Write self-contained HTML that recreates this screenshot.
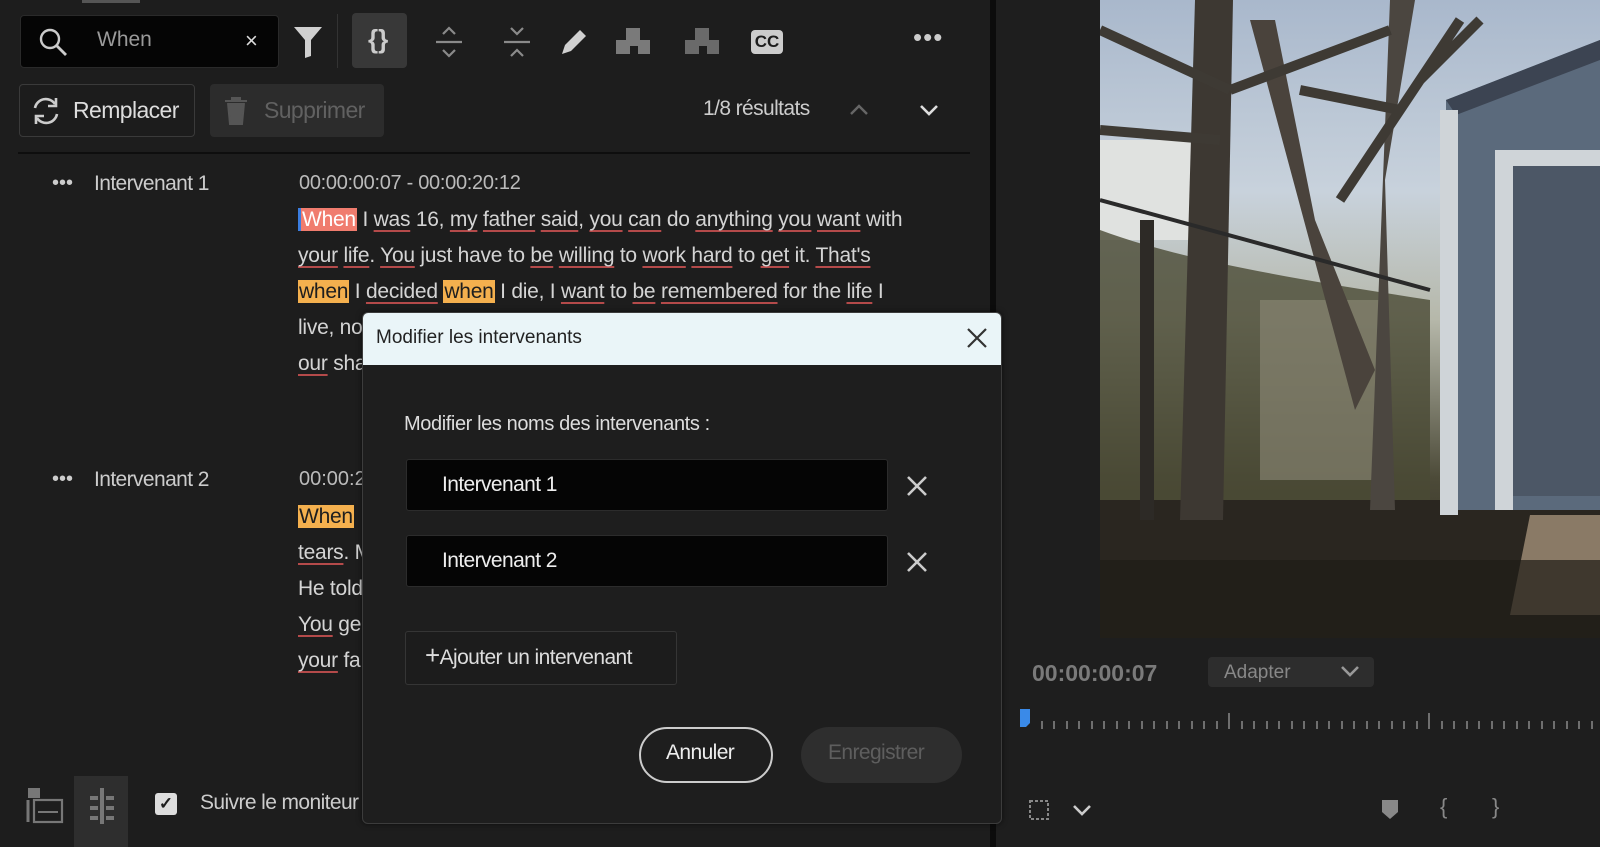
<!DOCTYPE html>
<html><head><meta charset="utf-8"><style>
*{margin:0;padding:0;box-sizing:border-box}
body{width:1600px;height:847px;background:#1e1e1e;font-family:"Liberation Sans",sans-serif;overflow:hidden;position:relative;color:#d8d8d8}
.a{position:absolute}
.u{text-decoration:underline;text-decoration-color:#b44a4a;text-underline-offset:4px}
.tx{font-size:21px;letter-spacing:-0.25px;color:#d4d4d4;line-height:36px}
.hl{background:#f4b04e;color:#1e1e1e;padding:0 1px}
.ic{fill:none;stroke:#8a8a8a;stroke-width:2.2}
</style></head><body>
<div class="a" style="left:0;top:0;width:990px;height:847px;background:#1d1d1d"></div>
<div class="a" style="left:990px;top:0;width:6px;height:847px;background:#0c0c0c"></div>
<div class="a" style="left:82px;top:0;width:58px;height:3px;background:#555"></div>
<!-- search -->
<div class="a" style="left:20px;top:15px;width:259px;height:53px;background:#050505;border-radius:4px;border:1px solid #2a2a2a"></div>
<svg class="a" style="left:36px;top:25px" width="34" height="34"><circle cx="14" cy="14" r="9" fill="none" stroke="#ccc" stroke-width="2.4"/><path d="M21 21l9 9" stroke="#ccc" stroke-width="2.8"/></svg>
<div class="a" style="left:97px;top:28px;font-size:21px;color:#9a9a9a">When</div>
<div class="a" style="left:245px;top:28px;font-size:22px;color:#ddd">×</div>
<svg class="a" style="left:292px;top:24px" width="34" height="36"><path d="M2 3h28l-11 13v16l-6 2V16z" fill="#d0d0d0"/></svg>
<div class="a" style="left:337px;top:14px;width:1px;height:54px;background:#333"></div>
<div class="a" style="left:352px;top:13px;width:55px;height:55px;background:#383838;border-radius:4px"></div>
<div class="a" style="left:368px;top:24px;font-size:26px;color:#ccc;font-weight:bold">{}</div>
<svg class="a" style="left:432px;top:24px" width="34" height="36"><path class="ic" d="M11 10l6-6 6 6M4 18h26M11 26l6 6 6-6"/></svg>
<svg class="a" style="left:500px;top:24px" width="34" height="36"><path class="ic" d="M11 4l6 6 6-6M4 18h26M11 32l6-6 6 6"/></svg>
<svg class="a" style="left:558px;top:26px" width="32" height="32"><path d="M4 28l3-9 15-15 6 6-15 15z" fill="#d0d0d0"/></svg>
<svg class="a" style="left:614px;top:26px" width="40" height="30"><path d="M12 2h14v12h10v14h-12v-8h-8v8H2V14h10z" fill="#7a7a7a"/></svg>
<svg class="a" style="left:683px;top:26px" width="40" height="30"><path d="M12 2h14v12h10v14h-12v-8h-8v8H2V14h10z" fill="#6a6a6a"/></svg>
<div class="a" style="left:751px;top:30px;width:32px;height:24px;background:#ccc;border-radius:4px;color:#1d1d1d;font-size:17px;font-weight:bold;text-align:center;line-height:24px">CC</div>
<div class="a" style="left:913px;top:22px;font-size:26px;color:#ccc;letter-spacing:1px">•••</div>
<!-- row 2 -->
<div class="a" style="left:19px;top:84px;width:176px;height:53px;border:1px solid #3a3a3a;border-radius:4px;background:#1c1c1c"></div>
<svg class="a" style="left:30px;top:95px" width="32" height="32"><path d="M5 13a11 11 0 0 1 20-4M27 19a11 11 0 0 1-20 4" fill="none" stroke="#ccc" stroke-width="2.6"/><path d="M26 3v8h-8M6 29v-8h8" fill="none" stroke="#ccc" stroke-width="2.6"/></svg>
<div class="a" style="left:73px;top:97px;font-size:23px;color:#ddd;letter-spacing:-0.6px">Remplacer</div>
<div class="a" style="left:210px;top:84px;width:174px;height:53px;background:#2c2c2c;border-radius:4px"></div>
<svg class="a" style="left:222px;top:95px" width="28" height="32"><path d="M3 6h22M10 6V3h8v3M6 8l2 21h12l2-21" fill="#555" stroke="#555" stroke-width="2"/></svg>
<div class="a" style="left:264px;top:97px;font-size:23px;color:#616161;letter-spacing:-0.6px">Supprimer</div>
<div class="a" style="left:703px;top:97px;font-size:21px;color:#ccc;letter-spacing:-0.6px">1/8 résultats</div>
<svg class="a" style="left:848px;top:102px" width="22" height="16"><path d="M3 12l8-8 8 8" fill="none" stroke="#666" stroke-width="2.4"/></svg>
<svg class="a" style="left:918px;top:102px" width="22" height="16"><path d="M3 4l8 8 8-8" fill="none" stroke="#ddd" stroke-width="2.6"/></svg>
<div class="a" style="left:18px;top:152px;width:952px;height:2px;background:#0e0e0e"></div>
<!-- speaker 1 -->
<div class="a" style="left:52px;top:172px;font-size:20px;color:#ccc">•••</div>
<div class="a" style="left:94px;top:172px;font-size:21px;color:#ccc;letter-spacing:-0.6px">Intervenant 1</div>
<div class="a" style="left:299px;top:172px;font-size:20px;color:#bbb;letter-spacing:-0.3px">00:00:00:07 - 00:00:20:12</div>
<div class="a tx" style="left:298px;top:202px;width:690px;white-space:nowrap">
<span style="background:#f07c6e;color:#fff;border-left:3px solid #3a7de0;padding:0 1px">When</span> I <span class="u">was</span> 16, <span class="u">my</span> <span class="u">father</span> <span class="u">said</span>, <span class="u">you</span> <span class="u">can</span> do <span class="u">anything</span> <span class="u">you</span> <span class="u">want</span> with<br>
<span class="u">your</span> <span class="u">life</span>. <span class="u">You</span> just have to <span class="u">be</span> <span class="u">willing</span> to <span class="u">work</span> <span class="u">hard</span> to <span class="u">get</span> it. <span class="u">That's</span><br>
<span class="hl">when</span> I <span class="u">decided</span> <span class="hl">when</span> I die, I <span class="u">want</span> to <span class="u">be</span> <span class="u">remembered</span> for the <span class="u">life</span> I<br>
live, no<br><span class="u">our</span> sha</div>
<!-- speaker 2 -->
<div class="a" style="left:52px;top:468px;font-size:20px;color:#ccc">•••</div>
<div class="a" style="left:94px;top:468px;font-size:21px;color:#ccc;letter-spacing:-0.6px">Intervenant 2</div>
<div class="a" style="left:299px;top:468px;font-size:20px;color:#bbb">00:00:2</div>
<div class="a tx" style="left:298px;top:499px;width:70px;white-space:nowrap"><span class="hl">When</span><br><span class="u">tears</span>. M<br>He told<br><span class="u">You</span> ge<br><span class="u">your</span> fa</div>
<!-- bottom left -->
<svg class="a" style="left:26px;top:786px" width="40" height="40"><rect x="2" y="2" width="12" height="10" fill="#777"/><rect x="8" y="14" width="28" height="22" fill="none" stroke="#777" stroke-width="2.2"/><path d="M12 26h20" stroke="#777" stroke-width="2"/><path d="M2 14v22" stroke="#777" stroke-width="3"/></svg>
<div class="a" style="left:74px;top:776px;width:54px;height:71px;background:#2e2e2e"></div>
<svg class="a" style="left:86px;top:786px" width="32" height="40"><path d="M16 2v36M4 12h8M20 12h8M4 22h8M20 22h8M4 32h8M20 32h8" stroke="#777" stroke-width="4"/></svg>
<div class="a" style="left:155px;top:793px;width:22px;height:22px;background:#ddd;border-radius:3px;color:#1d1d1d;font-size:17px;text-align:center;line-height:22px;font-weight:bold">✓</div>
<div class="a" style="left:200px;top:791px;font-size:21px;color:#ccc;letter-spacing:-0.6px">Suivre le moniteur</div>
<!-- video -->
<svg class="a" style="left:1100px;top:0" width="500" height="638">
<defs><linearGradient id="sk" x1="0" y1="0" x2="0" y2="1"><stop offset="0" stop-color="#a9b8cc"/><stop offset=".3" stop-color="#c8d2dc"/><stop offset=".5" stop-color="#b6b8aa"/><stop offset=".75" stop-color="#4c4a38"/><stop offset="1" stop-color="#26231c"/></linearGradient></defs>
<rect width="500" height="638" fill="url(#sk)"/>
<path d="M0 140h110v100H0z" fill="#e0e2e0"/>
<path d="M0 230C80 260 200 280 330 300V520H0z" fill="#4a4a34" opacity=".8"/>
<path d="M160 300h120v180H160z" fill="#8d8a78" opacity=".6"/>
<path d="M0 500h500v138H0z" fill="#2a2620"/>
<path d="M95 0h38l-10 520H80z" fill="#3d3832"/>
<path d="M150 20h25l40 200 60 150-20 40z" fill="#4a433c"/>
<path d="M290 0h25l-30 180 10 330h-25z" fill="#4b4640"/>
<path d="M0 30l130 60M0 130l120 10M130 90l160-60M240 200l120-180M200 90l100 20M320 80l60-60" stroke="#3e3a34" stroke-width="10"/>
<path d="M0 200l330 90" stroke="#2a2a2a" stroke-width="4"/>
<path d="M40 220h14v300H40z" fill="#2d2a26"/>
<path d="M346 100l154-60v470H346z" fill="#5b6a7c"/>
<path d="M346 100l154-60v20L356 115z" fill="#3c4452"/>
<rect x="340" y="110" width="18" height="405" fill="#cfd4d8"/>
<rect x="395" y="150" width="18" height="360" fill="#cfd4d8"/>
<rect x="395" y="150" width="105" height="16" fill="#cfd4d8"/>
<rect x="413" y="166" width="87" height="330" fill="#4c5766"/>
<path d="M430 515h70v100h-90z" fill="#8a7a66"/>
<path d="M0 560h500v78H0z" fill="#1f1c17" opacity=".7"/>
</svg>
<!-- monitor controls -->
<div class="a" style="left:1032px;top:660px;font-size:23px;color:#7a7a7a;font-weight:bold">00:00:00:07</div>
<div class="a" style="left:1208px;top:657px;width:166px;height:30px;background:#2d2d2d;border-radius:4px"></div>
<div class="a" style="left:1224px;top:662px;font-size:19px;color:#888">Adapter</div>
<svg class="a" style="left:1340px;top:664px" width="20" height="14"><path d="M2 3l8 8 8-8" fill="none" stroke="#999" stroke-width="2.6"/></svg>
<svg class="a" style="left:1018px;top:705px" width="582" height="30">
<path d="M2 4h10v14l-4 4H2z" fill="#3a8ae8"/>
<g stroke="#888" stroke-width="1.5">
<path d="M24 16v8M36 16v8M49 16v8M61 16v8M74 16v8M86 16v8M99 16v8M111 16v8M124 16v8M136 16v8M149 16v8M161 16v8M174 16v8M186 16v8M199 16v8M211 8v16M224 16v8M236 16v8M249 16v8M261 16v8M274 16v8M286 16v8M299 16v8M311 16v8M324 16v8M336 16v8M349 16v8M361 16v8M374 16v8M386 16v8M399 16v8M411 8v16M424 16v8M436 16v8M449 16v8M461 16v8M474 16v8M486 16v8M499 16v8M511 16v8M524 16v8M536 16v8M549 16v8M561 16v8M574 16v8"/>
</g></svg>
<svg class="a" style="left:1026px;top:797px" width="26" height="26"><rect x="4" y="4" width="18" height="18" fill="none" stroke="#888" stroke-width="2" stroke-dasharray="3 2"/></svg>
<svg class="a" style="left:1072px;top:803px" width="20" height="14"><path d="M2 3l8 8 8-8" fill="none" stroke="#ccc" stroke-width="2.6"/></svg>
<svg class="a" style="left:1380px;top:798px" width="20" height="22"><path d="M2 2h16v12l-8 7-8-7z" fill="#888"/></svg>
<div class="a" style="left:1440px;top:794px;font-size:22px;color:#888">{</div>
<div class="a" style="left:1492px;top:794px;font-size:22px;color:#888">}</div>
<!-- dialog -->
<div class="a" style="left:362px;top:312px;width:640px;height:512px;background:#1e1e1e;border:1px solid #3c3c3c;border-radius:6px;overflow:hidden;box-shadow:0 0 6px rgba(0,0,0,.6)">
<div style="height:52px;background:#eaf5f8;position:relative">
<div class="a" style="left:13px;top:14px;font-size:19px;color:#222">Modifier les intervenants</div>
<svg class="a" style="left:603px;top:14px" width="22" height="22"><path d="M2 2l18 18M20 2L2 20" stroke="#333" stroke-width="2.2"/></svg>
</div>
<div class="a" style="left:41px;top:100px;font-size:20px;color:#ddd;letter-spacing:-0.4px">Modifier les noms des intervenants :</div>
<div class="a" style="left:43px;top:146px;width:482px;height:52px;background:#050505;border:1px solid #2c2c2c;border-radius:3px"></div>
<div class="a" style="left:79px;top:160px;font-size:21px;color:#eee;letter-spacing:-0.6px">Intervenant 1</div>
<svg class="a" style="left:543px;top:162px" width="22" height="22"><path d="M2 2l18 18M20 2L2 20" stroke="#ccc" stroke-width="2.6"/></svg>
<div class="a" style="left:43px;top:222px;width:482px;height:52px;background:#050505;border:1px solid #2c2c2c;border-radius:3px"></div>
<div class="a" style="left:79px;top:236px;font-size:21px;color:#eee;letter-spacing:-0.6px">Intervenant 2</div>
<svg class="a" style="left:543px;top:238px" width="22" height="22"><path d="M2 2l18 18M20 2L2 20" stroke="#ccc" stroke-width="2.6"/></svg>
<div class="a" style="left:42px;top:318px;width:272px;height:54px;border:1px solid #353535;border-radius:3px;background:#1c1c1c"></div>
<div class="a" style="left:62px;top:332px;font-size:21px;color:#ddd;letter-spacing:-0.6px"><span style="font-size:26px;line-height:20px">+</span>Ajouter un intervenant</div>
<div class="a" style="left:276px;top:414px;width:134px;height:56px;border:2px solid #ccc;border-radius:28px"></div>
<div class="a" style="left:303px;top:428px;font-size:21px;color:#eee;letter-spacing:-0.6px">Annuler</div>
<div class="a" style="left:438px;top:414px;width:161px;height:56px;background:#2e2e2e;border-radius:28px"></div>
<div class="a" style="left:465px;top:428px;font-size:21px;color:#5e5e5e;letter-spacing:-0.6px">Enregistrer</div>
</div>
</body></html>
